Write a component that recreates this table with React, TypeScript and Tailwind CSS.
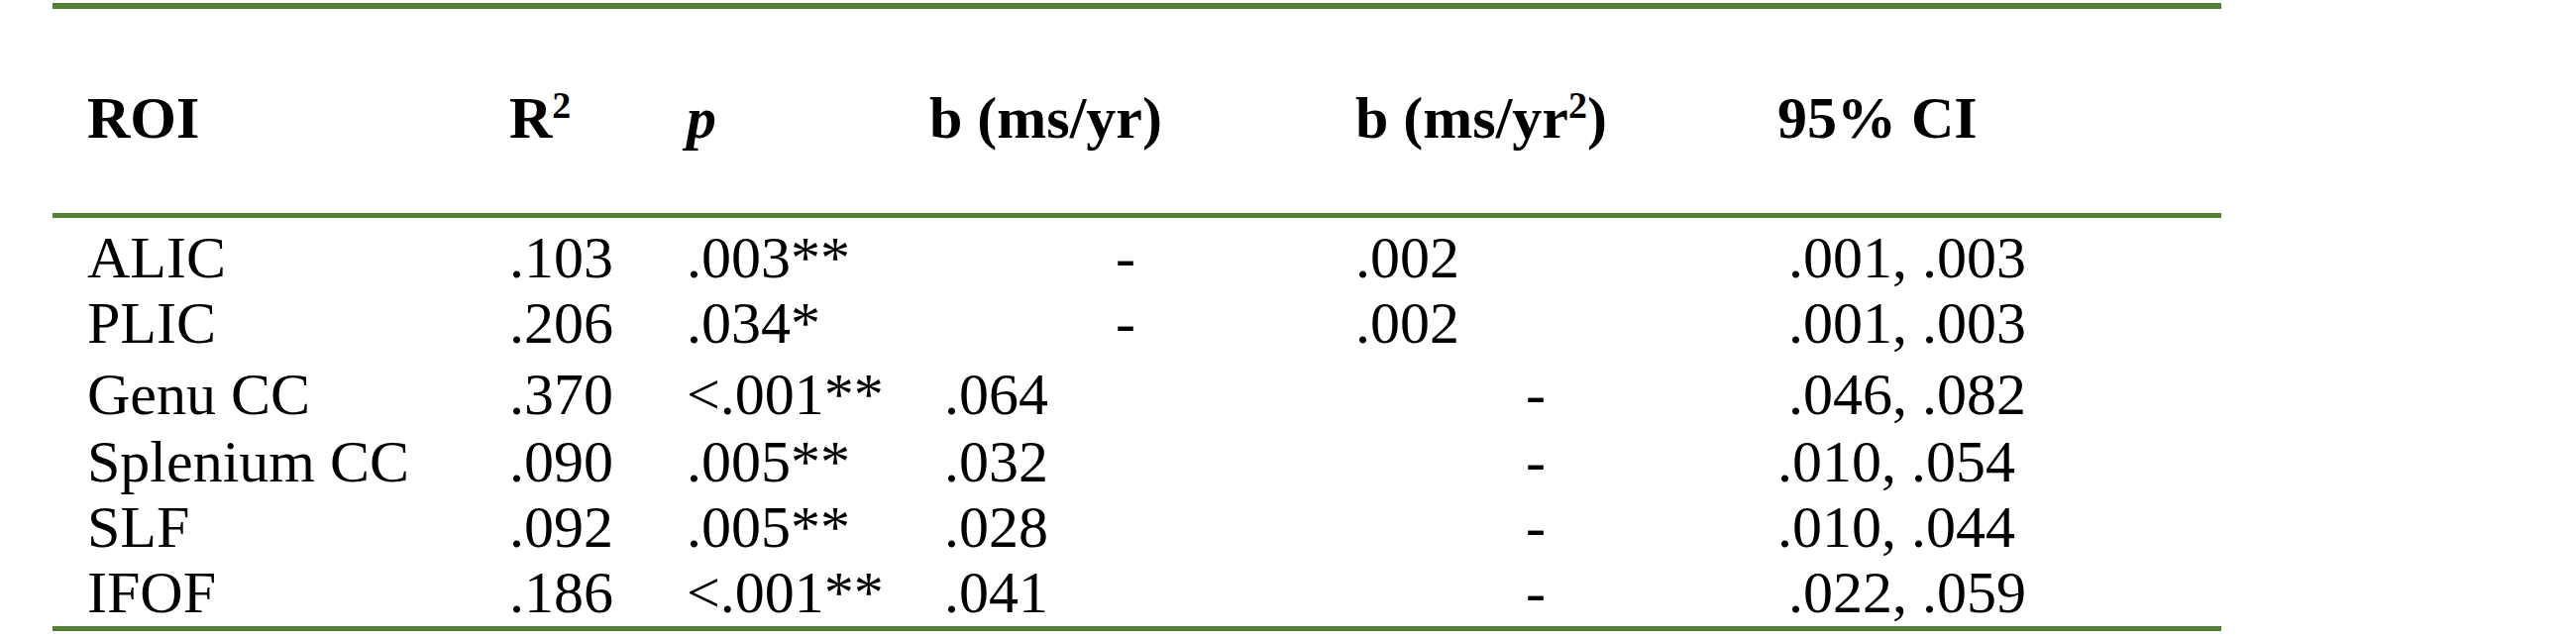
import React from 'react';

type Row = {
  roi: string;
  r2: string;
  p: string;
  b1: string | null;
  b2: string | null;
  ci: string;
  ciShift: boolean;
  h: string;
};

const ROWS: Row[] = [
  { roi: 'ALIC', r2: '.103', p: '.003**', b1: null, b2: '.002', ci: '.001, .003', ciShift: true, h: 'h-[66px]' },
  { roi: 'PLIC', r2: '.206', p: '.034*', b1: null, b2: '.002', ci: '.001, .003', ciShift: true, h: 'h-[72px]' },
  { roi: 'Genu CC', r2: '.370', p: '<.001**', b1: '.064', b2: null, ci: '.046, .082', ciShift: true, h: 'h-[68px]' },
  { roi: 'Splenium CC', r2: '.090', p: '.005**', b1: '.032', b2: null, ci: '.010, .054', ciShift: false, h: 'h-[66px]' },
  { roi: 'SLF', r2: '.092', p: '.005**', b1: '.028', b2: null, ci: '.010, .044', ciShift: false, h: 'h-[66px]' },
  { roi: 'IFOF', r2: '.186', p: '<.001**', b1: '.041', b2: null, ci: '.022, .059', ciShift: true, h: 'h-[66px]' },
];

const cols = 'grid grid-cols-[426px_179px_245px_430px_426px_1fr] pl-[35px]';

export default function App() {
  return (
    <div className="min-h-screen bg-white pl-[53px] pt-[3px] font-['Liberation_Serif',serif] text-[60px] leading-[66px] text-black">
      <div className="w-[2189px] border-t-[6px] border-b-[5px] border-[#538135]">
        {/* header */}
        <div className={`${cols} h-[211px] pt-[77px] border-b-[5px] border-[#538135] font-bold`}>
          <div>ROI</div>
          <div>
            R<sup className="text-[38px] top-[-20px]">2</sup>
          </div>
          <div className="italic">p</div>
          <div>b (ms/yr)</div>
          <div>
            b (ms/yr<sup className="text-[38px] top-[-20px]">2</sup>)
          </div>
          <div>95% CI</div>
        </div>

        {/* body */}
        <div className="pt-[7px] pb-[1px]">
          {ROWS.map((r) => (
            <div key={r.roi} className={`${cols} ${r.h}`}>
              <div>{r.roi}</div>
              <div>{r.r2}</div>
              <div>{r.p}</div>
              <div className={r.b1 ? 'pl-[15px]' : 'pl-[188px]'}>{r.b1 ?? '-'}</div>
              <div className={r.b2 ? 'pl-0' : 'pl-[172px]'}>{r.b2 ?? '-'}</div>
              <div className={r.ciShift ? 'pl-[11px]' : 'pl-0'}>{r.ci}</div>
            </div>
          ))}
        </div>
      </div>
    </div>
  );
}
